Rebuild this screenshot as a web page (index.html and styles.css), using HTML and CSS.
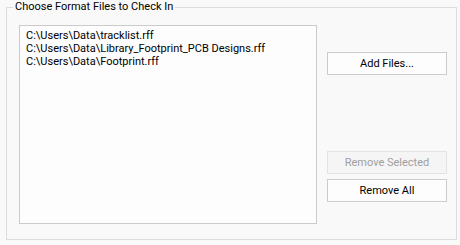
FILE: index.html
```html
<!DOCTYPE html>
<html lang="en">
<head>
    <meta charset="UTF-8">
    <title>Check In</title>
    <link rel="stylesheet" href="styles.css">
</head>
<body>
    <fieldset class="group">
        <legend>Choose Format Files to Check In</legend>
        <div class="row">
            <div class="file-list">
                <div class="item">C:\Users\Data\tracklist.rff</div>
                <div class="item">C:\Users\Data\Library_Footprint_PCB Designs.rff</div>
                <div class="item">C:\Users\Data\Footprint.rff</div>
            </div>
            <div class="actions">
                <button class="btn add">Add Files...</button>
                <button class="btn remove-sel" disabled>Remove Selected</button>
                <button class="btn remove-all">Remove All</button>
            </div>
        </div>
    </fieldset>
</body>
</html>
```

FILE: styles.css
```css
html, body {
    margin: 0;
    background-color: #f9f9f9;
}
body {
    padding: 0 3px 0 6px;
    font-family: Roboto, "Liberation Sans", Arial, sans-serif;
    font-size: 11px;
    color: #000;
}
.group {
    margin: 0;
    height: 240px;
    box-sizing: border-box;
    border: 1px solid #dcdcdc;
    padding: 11px 9px 0 12px;
}
.group legend {
    padding: 0 2px;
    margin-left: -6px;
    line-height: 14px;
}
.row {
    display: flex;
    gap: 10px;
}
.file-list {
    width: 298px;
    height: 199px;
    box-sizing: border-box;
    background: #fdfdfd;
    border: 1px solid #cbcbcb;
    padding: 3px 6px;
    line-height: 13px;
}
.item {
    white-space: nowrap;
}
.actions {
    display: flex;
    flex-direction: column;
    width: 120px;
}
.btn {
    height: 23px;
    width: 120px;
    font-family: inherit;
    font-size: 11px;
    background: #fdfdfd;
    border: 1px solid #cccccc;
    color: #000;
    padding: 0;
}
.add {
    margin-top: 27px;
}
.remove-sel {
    margin-top: 76px;
    background: #f5f5f5;
    border-color: #e3e3e3;
    color: #a0a0a0;
}
.remove-all {
    margin-top: 5px;
}
```
